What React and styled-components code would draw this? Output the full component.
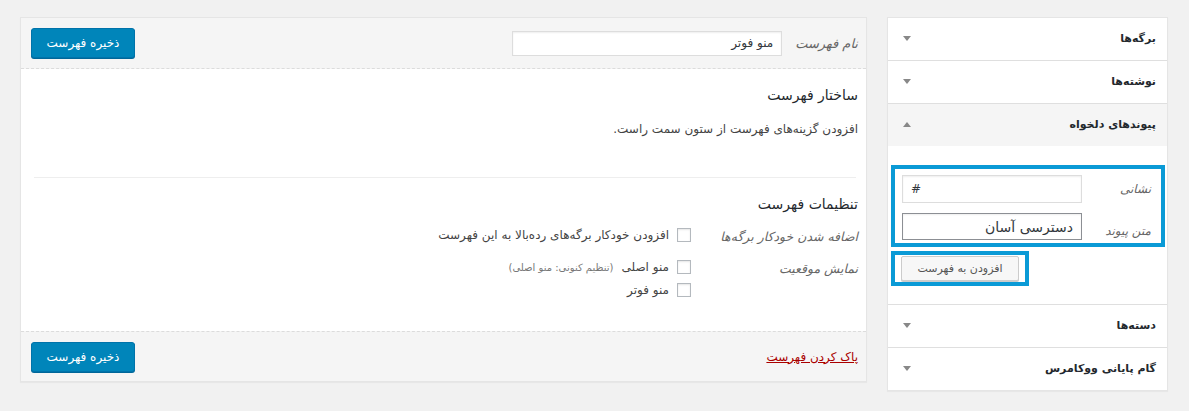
import React from "react";
import styled, { createGlobalStyle } from "styled-components";

const Global = createGlobalStyle`
	html, body {
		margin: 0;
		padding: 0;
		background: #f1f1f1;
	}
	body {
		font-family: "DejaVu Sans", "Noto Sans", sans-serif;
		font-size: 12px;
		color: #444;
	}
	* {
		box-sizing: border-box;
	}
`;

const Page = styled.div`
	direction: rtl;
	display: flex;
	align-items: flex-start;
	gap: 20px;
	padding: 17px 21px 0 20px;
	height: 411px;
`;

/* ---------- sidebar accordion ---------- */

const Sidebar = styled.div`
	width: 281px;
	flex-shrink: 0;
	background: #fff;
	border: 1px solid #e5e5e5;
	box-shadow: 0 1px 1px rgba(0, 0, 0, 0.04);
`;

const Section = styled.div`
	border-bottom: ${(p) => (p.last ? "none" : "1px solid #dfdfdf")};
`;

const SectionHead = styled.div`
	height: 42px;
	display: flex;
	align-items: center;
	justify-content: space-between;
	padding: 0 11px 2px 15px;
	background: ${(p) => (p.open ? "#f5f5f5" : "#fff")};
	font-weight: bold;
	font-size: 11px;
	color: #23282d;
`;

const Arrow = styled.span`
	width: 0;
	height: 0;
	border-left: 4px solid transparent;
	border-right: 4px solid transparent;
	${(p) =>
		p.up
			? "border-bottom: 5px solid #888;"
			: "border-top: 5px solid #888;"}
`;

const SectionBody = styled.div`
	padding: 19px 2px 18px 3px;
	display: flex;
	flex-direction: column;
	align-items: flex-end;
	gap: 4px;
`;

const Highlight = styled.div`
	border: 4px solid #0a9ad6;
	width: ${(p) => (p.tight ? "auto" : "100%")};
	padding: ${(p) => (p.tight ? "1px 6px 1px 6px" : "6px 10px 3px 7px")};
	display: flex;
	flex-direction: column;
	gap: 10px;
`;

const FieldRow = styled.div`
	display: flex;
	align-items: ${(p) => (p.bottom ? "flex-end" : "center")};
	justify-content: space-between;
`;

const FieldLabel = styled.label`
	font-style: italic;
	font-size: 12px;
	color: #666;
	padding-bottom: ${(p) => (p.bottom ? "2px" : "0")};
`;

const TextField = styled.input`
	width: 180px;
	height: ${(p) => (p.big ? "27px" : "28px")};
	border: 1px solid ${(p) => (p.dark ? "#8c8f94" : "#ddd")};
	box-shadow: inset 0 1px 2px rgba(0, 0, 0, 0.07);
	background: #fff;
	font-family: inherit;
	font-size: ${(p) => (p.big ? "14px" : "12px")};
	color: #32373c;
	padding: 0 8px;
	direction: ${(p) => (p.ltr ? "ltr" : "rtl")};
	outline: none;
`;

const SecondaryButton = styled.button`
	height: 25px;
	width: 118px;
	border: 1px solid #ccc;
	border-radius: 2px;
	background: #f7f7f7;
	box-shadow: 0 1px 0 #ccc;
	font-family: inherit;
	font-size: 11px;
	color: #555;
	padding: 0;
`;

/* ---------- menu edit panel ---------- */

const Editor = styled.div`
	flex: 1;
	background: #fff;
	border: 1px solid #e5e5e5;
	box-shadow: 0 1px 1px rgba(0, 0, 0, 0.04);
`;

const Bar = styled.div`
	height: ${(p) => (p.foot ? "50px" : "51px")};
	background: #f5f5f5;
	display: flex;
	align-items: center;
	gap: 13px;
	padding: 0 8px 0 10px;
	${(p) =>
		p.foot ? "border-top: 1px dashed #dcdcdc;" : "border-bottom: 1px dashed #dcdcdc;"}
`;

const NameLabel = styled.label`
	font-style: italic;
	font-size: 13px;
	color: #666;
`;

const NameInput = styled.input`
	width: 270px;
	height: 25px;
	border: 1px solid #ddd;
	box-shadow: inset 0 1px 2px rgba(0, 0, 0, 0.07);
	font-family: inherit;
	font-size: 12px;
	color: #32373c;
	padding: 0 8px;
	direction: rtl;
	outline: none;
`;

const PrimaryButton = styled.button`
	margin-inline-start: auto;
	width: 104px;
	height: 30px;
	background: #0085ba;
	border: 1px solid #0073aa;
	border-radius: 3px;
	box-shadow: 0 1px 0 #006799;
	color: #fff;
	font-family: inherit;
	font-size: 12px;
	padding: 0;
`;

const DeleteLink = styled.a`
	color: #a00;
	text-decoration: underline;
	font-size: 12px;
	cursor: pointer;
`;

const Body = styled.div`
	height: 262px;
	padding: 0 8px 0 11px;
`;

const Block = styled.div`
	padding-top: 18px;
	height: ${(p) => (p.first ? "108px" : "auto")};
`;

const Separator = styled.hr`
	margin: 0 2px;
	border: 0;
	border-top: 1px solid #eee;
`;

const Heading = styled.h3`
	margin: 0 0 ${(p) => (p.tight ? "16px" : "19px")};
	font-size: 14px;
	font-weight: normal;
	color: #23282d;
`;

const Note = styled.p`
	margin: 0;
	font-size: 12px;
	color: #444;
`;

const SettingRow = styled.div`
	display: flex;
	align-items: flex-start;
	margin-bottom: ${(p) => (p.gap ? "16px" : "0")};
`;

const SettingLabel = styled.div`
	width: 167px;
	flex-shrink: 0;
	font-style: italic;
	font-size: 12.5px;
	color: #666;
	padding-top: 1px;
`;

const Options = styled.div`
	display: flex;
	flex-direction: column;
	gap: 9px;
`;

const Option = styled.label`
	display: flex;
	align-items: center;
	gap: 8px;
	font-size: 12px;
	color: #444;
`;

const Box = styled.span`
	width: 14px;
	height: 14px;
	border: 1px solid #b4b9be;
	background: #fff;
	box-shadow: inset 0 1px 2px rgba(0, 0, 0, 0.1);
	flex-shrink: 0;
`;

const Hint = styled.span`
	font-size: 10px;
	color: #777;
`;

const sections = [
	{ title: "برگه‌ها" },
	{ title: "نوشته‌ها" },
	{ title: "پیوندهای دلخواه", open: true },
	{ title: "دسته‌ها" },
	{ title: "گام پایانی ووکامرس" },
];

const CustomLinks = () => (
	<SectionBody>
		<Highlight>
			<FieldRow>
				<FieldLabel>نشانی</FieldLabel>
				<TextField ltr defaultValue="#" />
			</FieldRow>
			<FieldRow bottom>
				<FieldLabel bottom>متن پیوند</FieldLabel>
				<TextField big dark defaultValue="دسترسی آسان" />
			</FieldRow>
		</Highlight>
		<Highlight tight>
			<SecondaryButton>افزودن به فهرست</SecondaryButton>
		</Highlight>
	</SectionBody>
);

const App = () => (
	<>
		<Global />
		<Page>
			<Sidebar>
				{sections.map((s, i) => (
					<Section key={s.title} last={i === sections.length - 1}>
						<SectionHead open={s.open}>
							<span>{s.title}</span>
							<Arrow up={s.open} />
						</SectionHead>
						{s.open && <CustomLinks />}
					</Section>
				))}
			</Sidebar>

			<Editor>
				<Bar>
					<NameLabel>نام فهرست</NameLabel>
					<NameInput defaultValue="منو فوتر" />
					<PrimaryButton>ذخیره فهرست</PrimaryButton>
				</Bar>
				<Body>
					<Block first>
						<Heading>ساختار فهرست</Heading>
						<Note>افزودن گزینه‌های فهرست از ستون سمت راست.</Note>
					</Block>
					<Separator />
					<Block>
						<Heading tight>تنظیمات فهرست</Heading>
						<SettingRow gap>
							<SettingLabel>اضافه شدن خودکار برگه‌ها</SettingLabel>
							<Options>
								<Option>
									<Box />
									افزودن خودکار برگه‌های رده‌بالا به این فهرست
								</Option>
							</Options>
						</SettingRow>
						<SettingRow>
							<SettingLabel>نمایش موقعیت</SettingLabel>
							<Options>
								<Option>
									<Box />
									منو اصلی <Hint>(تنظیم کنونی: منو اصلی)</Hint>
								</Option>
								<Option>
									<Box />
									منو فوتر
								</Option>
							</Options>
						</SettingRow>
					</Block>
				</Body>
				<Bar foot>
					<DeleteLink>پاک کردن فهرست</DeleteLink>
					<PrimaryButton>ذخیره فهرست</PrimaryButton>
				</Bar>
			</Editor>
		</Page>
	</>
);

export default App;
